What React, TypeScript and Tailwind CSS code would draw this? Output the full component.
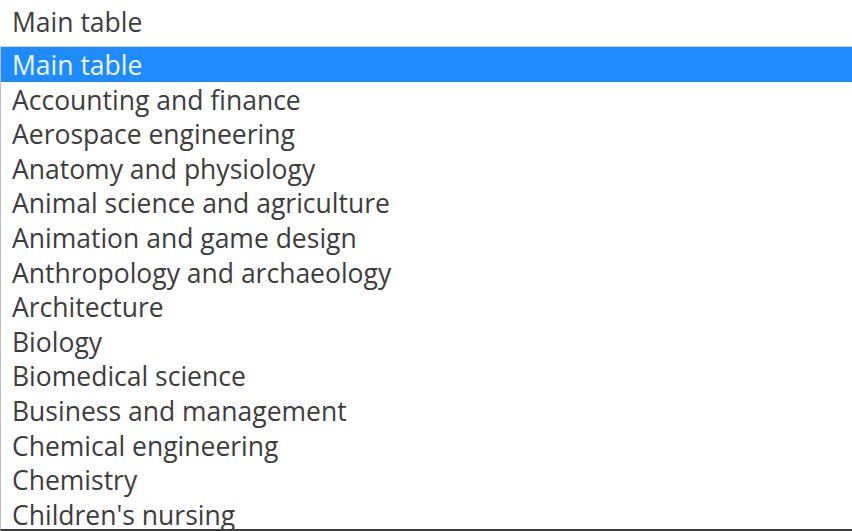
const options = [
  "Main table",
  "Accounting and finance",
  "Aerospace engineering",
  "Anatomy and physiology",
  "Animal science and agriculture",
  "Animation and game design",
  "Anthropology and archaeology",
  "Architecture",
  "Biology",
  "Biomedical science",
  "Business and management",
  "Chemical engineering",
  "Chemistry",
  "Children's nursing",
];

export default function App() {
  return (
    <div className="h-[531px] w-[852px] overflow-hidden bg-white font-['Open_Sans',sans-serif] text-[26.5px] text-[#3d3d3d]">
      {/* current value */}
      <div className="flex h-[46px] items-center pl-[12px] pb-[2px] leading-none">Main table</div>

      {/* open listbox */}
      <ul className="h-[485px] overflow-hidden border-t border-l border-b-2 border-t-[#c9d6e6] border-l-[#bdbdbd] border-b-[#3c3c3c]">
        {options.map((o, i) => (
          <li
            key={o}
            className={`flex h-[34.6px] items-center pl-[11px] pt-[2px] leading-none ${
              i === 0 ? "bg-[#1e8cff] text-[#eef6ff]" : ""
            }`}
          >
            {o}
          </li>
        ))}
      </ul>
    </div>
  );
}
